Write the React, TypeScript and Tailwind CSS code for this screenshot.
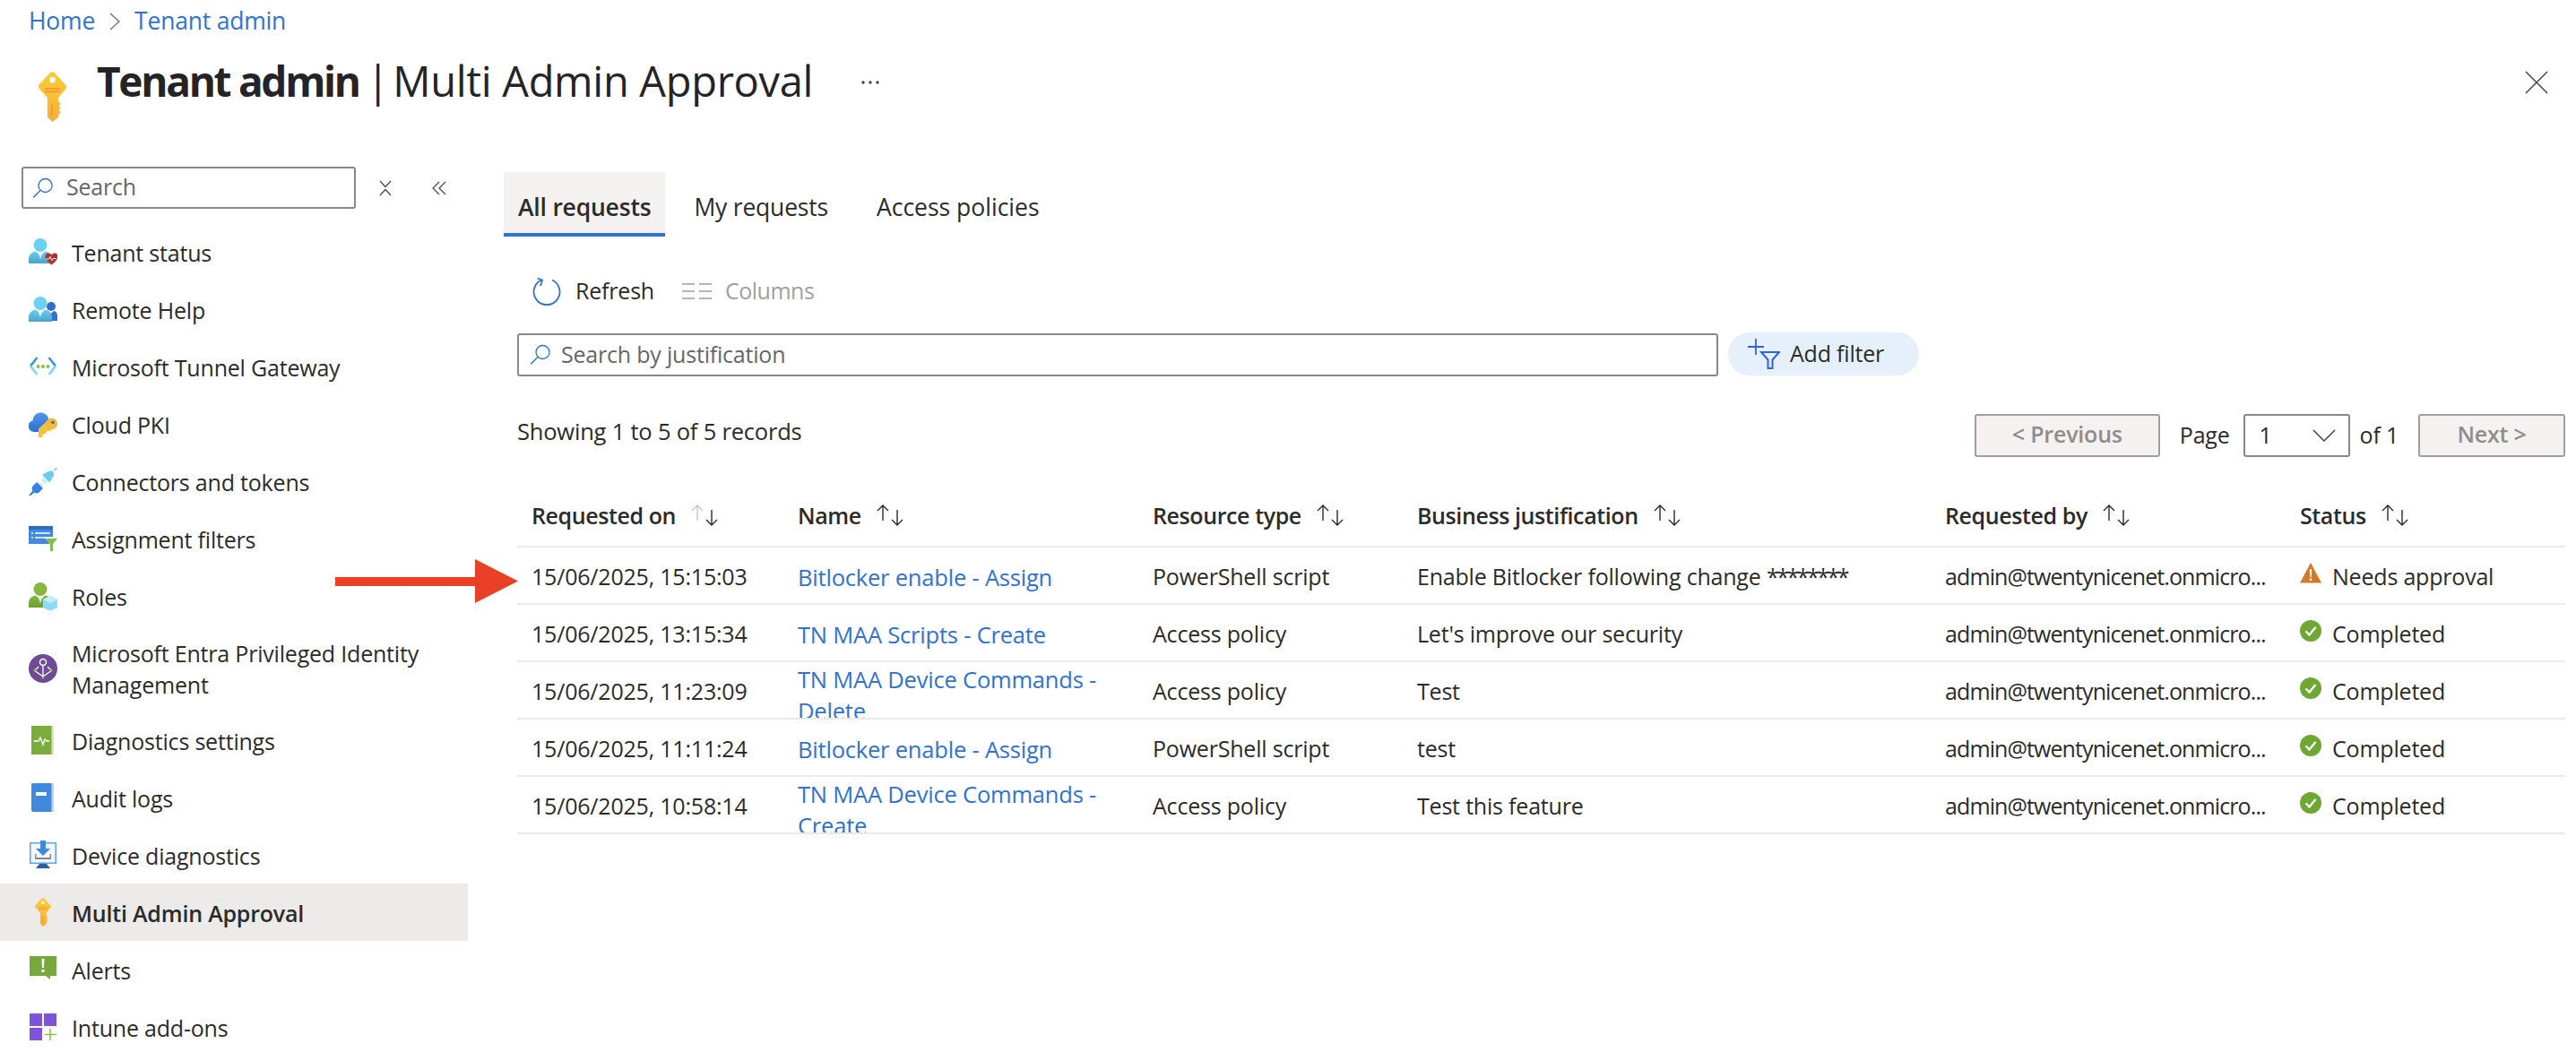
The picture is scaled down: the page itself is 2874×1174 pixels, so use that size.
import type { ReactNode } from 'react';

const blue = '#2f73cf';

function KeyIcon({ className }: { className: string }) {
  return (
    <svg viewBox="0 0 36 60" className={className}>
      <defs>
        <linearGradient id="keyFill" x1="0" y1="0" x2="0" y2="1">
          <stop offset="0" stopColor="#fbcd36" />
          <stop offset="1" stopColor="#f6b03c" />
        </linearGradient>
      </defs>
      <path
        fillRule="evenodd"
        fill="url(#keyFill)"
        d="M15 1.500a4 4 0 0 1 6 0L34 16a3.500 3.500 0 0 1 0 4.500L25 31v5l3 2.500-2.500 2.500 2.500 2.500-2.500 2.500 2.500 2.500-2.500 2.500v3L18 60l-6-5.500V31L2 20a3.500 3.500 0 0 1 0-4.500zM18 6.500a3.500 3.500 0 1 0 0 7 3.500 3.500 0 0 0 0-7z"
      />
      <path d="M9 19.500h18v1.600H9zM9 23h18v1.600H9z" fill="#f2932f" />
      <path d="M16.500 39h1.600v14h-1.600z" fill="#f2932f" />
    </svg>
  );
}

function SearchGlass() {
  return (
    <svg viewBox="0 0 24 24" fill="none" stroke={blue} strokeWidth="1.300" className="w-[24px] h-[24px]">
      <circle cx="14.500" cy="9" r="7.500" />
      <path d="M9 14.500 1 22.500" strokeWidth="1.500" />
    </svg>
  );
}

function SortArrows({ faded }: { faded?: boolean }) {
  return (
    <svg viewBox="0 0 32 24" fill="none" strokeWidth="1.400" className="w-[32px] h-[24px] mb-[2px]">
      <path d="M8 18V1M2 7l6-6 6 6" stroke={faded ? '#c8c6c4' : '#2b2b2b'} />
      <path d="M24 6v17M18 17l6 6 6-6" stroke="#2b2b2b" />
    </svg>
  );
}

function Person({ id, from, to }: { id: string; from: string; to: string }) {
  return (
    <>
      <defs>
        <linearGradient id={id} x1="0" y1="0" x2="0" y2="1">
          <stop offset="0" stopColor={from} />
          <stop offset="1" stopColor={to} />
        </linearGradient>
      </defs>
      <circle cx="13" cy="8.500" r="7.500" fill={from} />
      <path d="M0 29v-5c0-5 4-8 8-8.500l5 5 5-5c4 .5 8 3.500 8 8.500v5z" fill={`url(#${id})`} />
      <path d="M10.500 17h5L13 24z" fill="#e4f5fb" />
    </>
  );
}

const icons: Record<string, ReactNode> = {
  status: (
    <svg viewBox="0 0 32 32" className="w-[32px] h-[32px]">
      <Person id="p1" from="#6bd0f2" to="#4ba3c9" />
      <path d="M19 19c3-3 6-1 6.500 1 .5-2 4-4 6.500-1 2 3-1 7-6.500 11.500C20 26 17 22 19 19z" fill="#b3312e" />
      <path d="M19.500 24h3l1.500-2.500 2 4 1.500-2h3" fill="none" stroke="#fff" strokeWidth="1" />
    </svg>
  ),
  help: (
    <svg viewBox="0 0 32 32" className="w-[32px] h-[32px]">
      <circle cx="25" cy="13" r="5" fill="#2f6fc9" />
      <path d="M18 29v-6c0-3 2-5 4-5l3 3 3-3c2 0 4 2 4 5v6z" fill="#2f73cf" />
      <g transform="translate(0 1)">
        <Person id="p2" from="#6bd0f2" to="#4ba3c9" />
      </g>
    </svg>
  ),
  tunnel: (
    <svg viewBox="0 0 32 32" fill="none" className="w-[32px] h-[32px]">
      <path d="M9.500 6 2 15.500" stroke="#3b8ee0" strokeWidth="2.500" />
      <path d="M2 15.500 9.500 25" stroke="#7bd6f5" strokeWidth="2.500" />
      <path d="M22.500 6 30 15.500" stroke="#3b8ee0" strokeWidth="2.500" />
      <path d="M30 15.500 22.500 25" stroke="#7bd6f5" strokeWidth="2.500" />
      <circle cx="10.500" cy="16" r="2" fill="#86bf4e" />
      <circle cx="16" cy="16" r="2" fill="#86bf4e" />
      <circle cx="21.500" cy="16" r="2" fill="#86bf4e" />
    </svg>
  ),
  pki: (
    <svg viewBox="0 0 32 32" className="w-[32px] h-[32px]">
      <defs>
        <linearGradient id="cloudFill" x1="0" y1="0" x2="0" y2="1">
          <stop offset="0" stopColor="#4d96e8" />
          <stop offset="1" stopColor="#2f6fd0" />
        </linearGradient>
      </defs>
      <path d="M6 25a6.500 6.500 0 0 1-1.500-12.800A9 9 0 0 1 22 9.500L20 25z" fill="url(#cloudFill)" />
      <path d="M20.500 13 11 21.500V31h4l1-3.500 3-.5 1-3h5z" fill="#f8c03f" />
      <circle cx="25.500" cy="16" r="6.500" fill="#f6b93a" />
      <circle cx="27" cy="14.500" r="1.800" fill="#2f73cf" />
    </svg>
  ),
  connectors: (
    <svg viewBox="0 0 32 32" className="w-[32px] h-[32px]">
      <path d="m9 20 3-3 4 4-3 3zM14 15l3-3 4 4-3 3z" fill="#c9ecfa" />
      <path d="m0 32 4.500-5.500c-1.500-2-1-3.500 0-5L9 17l7 7-4.500 4.500c-1.500 1-3 1.500-5 0L1 33z" fill="#3a7ee0" />
      <path d="m15 9 7-4c2-1 4-.5 5 .5l3.500-5 1.500 1.500-5 3.500c1 1 1.500 3 .5 5l-4 7z" fill="#68cdf0" />
    </svg>
  ),
  filters: (
    <svg viewBox="0 0 32 32" className="w-[32px] h-[32px]">
      <path d="M0 2h27v20H0z" fill="#4389e0" />
      <path d="M0 2h27v4H0z" fill="#2f6cc6" />
      <path d="M3 9h2v2H3zM7 9h17v2H7zM3 14h2v2H3zM7 14h14v2H7z" fill="#cfe3f7" />
      <path d="M17 14h15l-5 7v8l-4 2V21z" fill="#fff" />
      <path d="M19 16h13l-5 6v8l-3 0V22z" fill="#86bf3f" />
    </svg>
  ),
  roles: (
    <svg viewBox="0 0 32 32" className="w-[32px] h-[32px]">
      <Person id="p3" from="#86b83f" to="#6f9f30" />
      <path d="m24 16 8 4v9l-8 4-8-4v-9z" fill="#8fdcf2" />
      <path d="m16 20 8 4 8-4-8-4z" fill="#c4effa" />
    </svg>
  ),
  pim: (
    <svg viewBox="0 0 32 32" className="w-[32px] h-[32px]">
      <circle cx="16" cy="16" r="16" fill="#6f4a98" />
      <circle cx="16" cy="9" r="3.500" fill="none" stroke="#fff" strokeWidth="1.500" />
      <path d="M16 13v12M6 18l10 7 10-7M7 18l4-4M25 18l-4-4" fill="none" stroke="#fff" strokeWidth="1.300" />
      <circle cx="7" cy="18" r="1.500" fill="#8cc63f" />
      <circle cx="25" cy="18" r="1.500" fill="#8cc63f" />
      <circle cx="16" cy="26" r="1.500" fill="#8cc63f" />
    </svg>
  ),
  diagnostics: (
    <svg viewBox="0 0 32 32" className="w-[32px] h-[32px]">
      <path d="M3 0h25v32H3z" fill="#7bac3c" />
      <path d="M25.500 0H28v32h-2.500z" fill="#d4e8b4" />
      <path d="M6 17h5l2-4 3 8 2-6 2 2h3" fill="none" stroke="#fff" strokeWidth="1.300" />
    </svg>
  ),
  audit: (
    <svg viewBox="0 0 32 32" className="w-[32px] h-[32px]">
      <path d="M3 2a2 2 0 0 1 2-2h23v32H5a2 2 0 0 1-2-2z" fill="#4189dd" />
      <path d="M25.500 0H28v32h-2.500z" fill="#bcd7f3" />
      <path d="M8 10h12v4H8z" fill="#fff" />
    </svg>
  ),
  device: (
    <svg viewBox="0 0 32 32" className="w-[32px] h-[32px]">
      <path d="M1 2h30v24H1z" fill="#5ea4e8" />
      <path d="M2.500 3.500h27v21h-27z" fill="#f2f7fc" />
      <path d="M12 26h8l4 5H8z" fill="#2a5caa" />
      <path d="M13 0h6v9h5l-8 8-8-8h5z" fill="#3d8ae0" />
      <path d="M7 15h1.500v4h15v-4H25v6H7z" fill="#8a8886" />
    </svg>
  ),
  alerts: (
    <svg viewBox="0 0 32 32" className="w-[32px] h-[32px]">
      <path d="M1 1h30v22H24v4l-5-4H1z" fill="#76a83c" />
      <path d="M14.500 4h3l-.5 10h-2zM14.500 16h3v3h-3z" fill="#fff" />
    </svg>
  ),
  addons: (
    <svg viewBox="0 0 32 32" className="w-[32px] h-[32px]">
      <path d="M1 1h14v14H1zM17 1h14v14H17zM1 17h14v14H1z" fill="#7d52dc" />
      <path d="M24 18v13M17.500 24.500h13.500" stroke="#86bf4e" strokeWidth="1.500" />
    </svg>
  ),
};

const navItems = [
  { key: 'status', label: 'Tenant status' },
  { key: 'help', label: 'Remote Help' },
  { key: 'tunnel', label: 'Microsoft Tunnel Gateway' },
  { key: 'pki', label: 'Cloud PKI' },
  { key: 'connectors', label: 'Connectors and tokens' },
  { key: 'filters', label: 'Assignment filters' },
  { key: 'roles', label: 'Roles' },
  { key: 'pim', label: 'Microsoft Entra Privileged Identity Management' },
  { key: 'diagnostics', label: 'Diagnostics settings' },
  { key: 'audit', label: 'Audit logs' },
  { key: 'device', label: 'Device diagnostics' },
  { key: 'maa', label: 'Multi Admin Approval', active: true },
  { key: 'alerts', label: 'Alerts' },
  { key: 'addons', label: 'Intune add-ons' },
];

const rows = [
  { on: '15/06/2025, 15:15:03', name: 'Bitlocker enable - Assign', type: 'PowerShell script', why: 'Enable Bitlocker following change ', masked: '********', status: 'Needs approval' },
  { on: '15/06/2025, 13:15:34', name: 'TN MAA Scripts - Create', type: 'Access policy', why: "Let's improve our security", status: 'Completed' },
  { on: '15/06/2025, 11:23:09', name: 'TN MAA Device Commands - Delete', type: 'Access policy', why: 'Test', status: 'Completed', wraps: true },
  { on: '15/06/2025, 11:11:24', name: 'Bitlocker enable - Assign', type: 'PowerShell script', why: 'test', status: 'Completed' },
  { on: '15/06/2025, 10:58:14', name: 'TN MAA Device Commands - Create', type: 'Access policy', why: 'Test this feature', status: 'Completed', wraps: true },
];

const columns = ['Requested on', 'Name', 'Resource type', 'Business justification', 'Requested by', 'Status'];
const gridCols = 'grid grid-cols-[297px_396px_295px_589px_396px_1fr]';

function StatusIcon({ status }: { status: string }) {
  if (status === 'Completed') {
    return (
      <svg viewBox="0 0 24 24" className="w-[24px] h-[24px] mt-[-7px] shrink-0">
        <circle cx="12" cy="12" r="12" fill="#6ea832" />
        <path d="m6.500 12.500 4 4 7-8.500" fill="none" stroke="#fff" strokeWidth="2.400" />
      </svg>
    );
  }
  return (
    <svg viewBox="0 0 24 24" className="w-[24px] h-[24px] mt-[-7px] shrink-0">
      <path d="M12 0 24 22.500H0z" fill="#d4782a" />
      <path d="M10.800 7h2.400l-.4 9h-1.600zM10.800 17.500h2.400V20h-2.400z" fill="#fff" />
    </svg>
  );
}

export default function App() {
  return (
    <div
      className="relative w-[2874px] h-[1174px] overflow-hidden bg-white text-[#2b2b2b] text-[25px] tracking-[-0.2px]"
      style={{ fontFamily: '"Open Sans", "Noto Sans", sans-serif' }}
    >
      {/* breadcrumb */}
      <div className="flex items-center h-[48px] pl-[32px] text-[26.500px] text-[#2f73cf]">
        <span>Home</span>
        <svg viewBox="0 0 12 20" fill="none" stroke="#777" strokeWidth="1.500" className="w-[12px] h-[20px] mx-[16px]">
          <path d="m1 1 10 9-10 9" />
        </svg>
        <span>Tenant admin</span>
      </div>

      {/* title */}
      <div className="flex h-[138px] pl-[41px] pr-[31px]">
        <KeyIcon className="w-[35px] h-[56px] mt-[32px] shrink-0" />
        <h1 className="ml-[32px] text-[47px] leading-[85px] text-[#242428] tracking-[-0.3px] whitespace-nowrap">
          <span className="font-bold text-[46px] tracking-[-2.300px]">Tenant admin</span>
          <span className="ml-[8px]">|</span>
          <span className="ml-[4px]">Multi Admin Approval</span>
        </h1>
        <svg viewBox="0 0 22 6" className="ml-[53px] mt-[41px] w-[22px] h-[6px]" fill="#444">
          <circle cx="3" cy="3" r="1.700" />
          <circle cx="11" cy="3" r="1.700" />
          <circle cx="19" cy="3" r="1.700" />
        </svg>
        <svg viewBox="0 0 26 26" fill="none" stroke="#444" strokeWidth="1.500" className="ml-auto mt-[31px] w-[26px] h-[26px]">
          <path d="m1 1 24 24M25 1 1 25" />
        </svg>
      </div>

      <div className="flex">
        {/* sidebar */}
        <aside className="w-[522px] shrink-0">
          <div className="flex items-center h-[47px] pl-[24px]">
            <div className="flex items-center w-[373px] h-[47px] border-2 border-[#8a8886] rounded-[3px] pl-[10px]">
              <SearchGlass />
              <span className="ml-[14px] pb-[1px] text-[#666]">Search</span>
            </div>
            <svg viewBox="0 0 14 20" fill="none" stroke="#444" strokeWidth="1.200" className="ml-[26px] w-[14px] h-[20px]">
              <path d="m1 2 6 6.500L13 2M1 18l6-6.500 6 6.500" />
            </svg>
            <svg viewBox="0 0 16 16" fill="none" stroke="#444" strokeWidth="1.200" className="ml-[45px] w-[16px] h-[16px]">
              <path d="M8 1 1 8l7 7M15 1 8 8l7 7" />
            </svg>
          </div>
          <nav className="mt-[16px]">
            {navItems.map(item => (
              <div
                key={item.key}
                className={`flex items-center pl-[32px] ${item.key === 'pim' ? 'h-[97px]' : 'h-[64px]'} ${item.active ? 'bg-[#ecebe9] font-semibold' : ''}`}
              >
                <span className="flex justify-center w-[32px] shrink-0">
                  {item.key === 'maa' ? <KeyIcon className="w-[20px] h-[32px]" /> : icons[item.key]}
                </span>
                <span className="ml-[16px] w-[430px] pt-[2px] leading-[35px]">{item.label}</span>
              </div>
            ))}
          </nav>
        </aside>

        {/* main content */}
        <main className="flex-1 pl-[55px] pr-[12px]">
          <div className="flex items-stretch h-[72px] ml-[-15px] mt-[6px] text-[26.500px]">
            <div className="flex items-center px-[16px] pt-[11px] bg-[#f3f2f1] border-b-[4px] border-[#2f73cf] font-semibold">All requests</div>
            <div className="flex items-center ml-[32px] pt-[11px] pb-[4px]">My requests</div>
            <div className="flex items-center ml-[54px] pt-[11px] pb-[4px] tracking-[0px]">Access policies</div>
          </div>

          {/* toolbar */}
          <div className="flex items-center h-[48px] mt-[37px] pl-[17px]">
            <svg viewBox="0 0 32 32" fill="none" stroke="#2f73cf" strokeWidth="1.800" className="w-[32px] h-[32px]">
              <path d="M10 3.500A14.500 14.500 0 1 0 22 3.500M5.500 1.500 11 3.500 9 10" />
            </svg>
            <span className="ml-[16px]">Refresh</span>
            <svg viewBox="0 0 33 18" fill="none" stroke="#a19f9d" strokeWidth="1.500" className="ml-[31px] w-[33px] h-[18px]">
              <path d="M0 1h14M0 9h14M0 17h14M19 1h14M19 9h14M19 17h14" />
            </svg>
            <span className="ml-[15px] tracking-[-0.500px] text-[#a19f9d]">Columns</span>
          </div>

          {/* search and filter */}
          <div className="flex items-center mt-[23px] h-[48px]">
            <div className="flex items-center w-[1340px] h-[48px] border-2 border-[#8a8886] rounded-[3px] pl-[12px]">
              <SearchGlass />
              <span className="ml-[11px] text-[#666]">Search by justification</span>
            </div>
            <div className="flex items-center ml-[11px] w-[213px] h-[48px] mb-[3px] rounded-full bg-[#e5f0fa] pl-[22px]">
              <svg viewBox="0 0 36 34" fill="none" stroke="#2b66d6" strokeWidth="1.800" className="w-[36px] h-[34px]">
                <path d="M0 9h18M9 0v18" />
                <path d="M15 15h20l-7.500 8.500V33h-5V23.500z" strokeWidth="2" />
              </svg>
              <span className="ml-[11px]">Add filter</span>
            </div>
          </div>

          {/* record count and pager */}
          <div className="flex items-center mt-[42px] h-[48px]">
            <span className="pb-[9px] text-[25.500px]">Showing 1 to 5 of 5 records</span>
            <div className="flex items-center justify-center ml-auto w-[207px] h-[48px] bg-[#f3f2f1] border-2 border-[#a19f9d] rounded-[3px] text-[#8f8d8b] font-semibold pb-[3px]">
              &lt; Previous
            </div>
            <span className="ml-[22px]">Page</span>
            <div className="flex items-center justify-between ml-[15px] w-[119px] h-[48px] border-2 border-[#8a8886] rounded-[3px] pl-[16px] pr-[14px]">
              <span>1</span>
              <svg viewBox="0 0 26 14" fill="none" stroke="#444" strokeWidth="1.500" className="w-[26px] h-[14px]">
                <path d="m1 1 12 12L25 1" />
              </svg>
            </div>
            <span className="ml-[11px]">of 1</span>
            <div className="flex items-center justify-center ml-[22px] w-[164px] h-[48px] bg-[#f3f2f1] border-2 border-[#a19f9d] rounded-[3px] text-[#8f8d8b] font-semibold pb-[3px]">
              Next &gt;
            </div>
          </div>

          {/* table */}
          <div className="mt-[35px]">
            <div className={`${gridCols} h-[66px] pb-[2px] border-b-2 border-[#edebe9] font-semibold tracking-[-0.400px]`}>
              {columns.map(col => (
                <div key={col} className="flex items-center gap-[16px] pl-[16px]">
                  <span>{col}</span>
                  <SortArrows faded={col === 'Requested on'} />
                </div>
              ))}
            </div>
            {rows.map(row => (
              <div key={row.on} className={`${gridCols} h-[64px] border-b-2 border-[#edebe9]`}>
                <div className="flex items-center pl-[16px] pt-[3px]">{row.on}</div>
                <div className={`flex items-center pl-[16px] pr-[8px] h-[62px] overflow-hidden ${row.wraps ? 'pt-[11px]' : 'pt-[5px]'}`}>
                  <span className="block leading-[35px] text-[25.500px] text-[#2f73cf]">{row.name}</span>
                </div>
                <div className="flex items-center pl-[16px] pt-[3px]">{row.type}</div>
                <div className="flex items-center pl-[16px] pt-[3px]">
                  <span>
                    {row.why}
                    {row.masked && <span className="tracking-[-2.500px]">{row.masked}</span>}
                  </span>
                </div>
                <div className="flex items-center pl-[16px] pt-[3px] whitespace-nowrap tracking-[-0.900px]">admin@twentynicenet.onmicro...</div>
                <div className="flex items-center gap-[12px] pl-[16px] pt-[3px]">
                  <StatusIcon status={row.status} />
                  <span>{row.status}</span>
                </div>
              </div>
            ))}
          </div>
        </main>
      </div>

      {/* red callout arrow drawn over the page */}
      <svg viewBox="0 0 204 49" className="absolute left-[374px] top-[624px] w-[204px] h-[49px]">
        <path d="M0 20h156V0l48 24.500L156 49V30H0z" fill="#ea4025" />
      </svg>
    </div>
  );
}
